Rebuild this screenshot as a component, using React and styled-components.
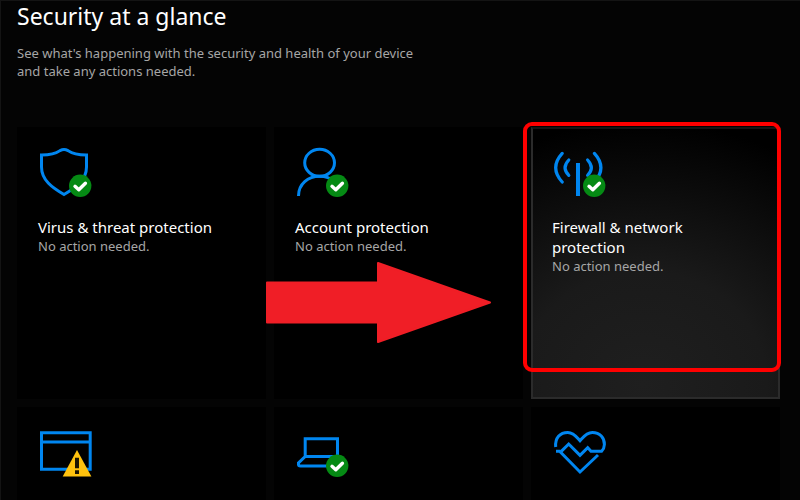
import styled, { createGlobalStyle } from "styled-components";

const GlobalStyle = createGlobalStyle`
  * {
    box-sizing: border-box;
  }
  html {
    scrollbar-width: none;
  }
  body {
    margin: 0;
    background: #040404;
    color: #fff;
    font-family: "Noto Sans", "Open Sans", sans-serif;
  }
`;

const BLUE = "#0086f0";

function OkBadge() {
  return (
    <g stroke="none">
      <circle cx="42.2" cy="38.8" r="11.2" fill="#058a14" />
      <path d="M37 39.3 L40.8 42.8 L47.4 36.2" fill="none" stroke="#fff" strokeWidth="3.4" strokeLinecap="round" strokeLinejoin="round" />
    </g>
  );
}

function ShieldIcon() {
  return (
    <path d="M3.5 8 C12 8 18 6.5 22 3.6 Q26 1.6 30 3.6 C34 6.5 40 8 48.5 8 V20 C48.5 33 38 40.5 26 47.5 C14 40.5 3.5 33 3.5 20 Z" />
  );
}

function AccountIcon() {
  return (
    <>
      <ellipse cx="24.6" cy="15.8" rx="14.9" ry="13.5" />
      <path d="M3.5 49 C3.5 37 13 29.3 24.6 29.3 S45.7 37 45.7 49" />
    </>
  );
}

function FirewallIcon() {
  return (
    <>
      <path strokeWidth="4" d="M26 16 V49" />
      <g strokeLinecap="round" strokeWidth="3.2">
        <path d="M10.2 6.4 Q-2.8 20.7 10.2 35" />
        <path d="M16.8 13 Q9.4 20.7 16.8 28.4" />
        <path d="M35.6 13 Q43 20.7 35.6 28.4" />
        <path d="M42.4 6.4 Q55.4 20.7 42.4 35" />
      </g>
    </>
  );
}

function BrowserIcon() {
  return (
    <>
      <path d="M3.5 5.8 H52.2 V42.3 H3.5 Z M3.5 15 H52.2" />
      <path d="M39 23 L53.4 49.6 H24.7 Z" fill="#ffc20e" stroke="none" />
      <path d="M37 30.7 H41 V41.3 H37 Z M37 43.3 H41 V47 H37 Z" fill="#1c1500" stroke="none" />
    </>
  );
}

function DeviceIcon() {
  return (
    <path d="M10.2 29.5 V11.8 H42.5 V29.5 M42.5 29.5 H10.2 L3.5 36 V37.5 Q3.5 39 5.5 39 H47" />
  );
}

function HealthIcon() {
  return (
    <>
      <path d="M3.7 20 C2.8 11 8 5.4 15.8 5.4 C22 5.4 25 10.5 28 13.8 C31 10.5 34 5.4 40.3 5.4 C48 5.4 52.6 11 52.4 17.5 Q52.3 21.5 49.6 24.3 H39 L35.7 20.6 L28 28.3 L16.7 17 L9 24.6" />
      <path d="M4 24.2 H7.6 L28 45 L46 28" />
    </>
  );
}

const tiles = [
  { id: "virus", title: "Virus & threat protection", status: "No action needed.", Icon: ShieldIcon, ok: true },
  { id: "account", title: "Account protection", status: "No action needed.", Icon: AccountIcon, ok: true, arrow: true },
  { id: "firewall", title: "Firewall & network protection", status: "No action needed.", Icon: FirewallIcon, ok: true, active: true },
  { id: "browser", label: "Browser", Icon: BrowserIcon },
  { id: "device", label: "Device", Icon: DeviceIcon, ok: true },
  { id: "health", label: "Health", Icon: HealthIcon },
];

export default function App() {
  return (
    <Page>
      <GlobalStyle />
      <Header>
        <Heading>Security at a glance</Heading>
        <Intro>
          See what's happening with the security and health of your device and take any actions needed.
        </Intro>
      </Header>
      <Grid>
        {tiles.map(({ id, title, label, status, Icon, ok, arrow, active }) => (
          <Slot key={id}>
            <Tile type="button" aria-label={label} $active={active} $short={!title}>
              <TileIcon viewBox="0 0 56 50" aria-hidden="true">
                <Icon />
                {ok && <OkBadge />}
              </TileIcon>
              {title && <TileTitle>{title}</TileTitle>}
              {status && <TileStatus>{status}</TileStatus>}
            </Tile>
            {arrow && (
              <Arrow viewBox="0 0 225 81" aria-hidden="true">
                <path
                  d="M1 20.5 H112 V1 L224 40.5 L112 80 V60.5 H1 Z"
                  fill="#f01e26"
                  stroke="#f01e26"
                  strokeWidth="2"
                  strokeLinejoin="round"
                />
              </Arrow>
            )}
            {active && <Highlight />}
          </Slot>
        ))}
      </Grid>
    </Page>
  );
}

const Page = styled.main`
  padding: 0 20px 4px 16px;
  border-top: 1px solid #141414;
  border-left: 1px solid #141414;
`;

const Header = styled.header`
  min-height: 126px;
`;

const Heading = styled.h1`
  margin: 0 0 13px;
  font-size: 23px;
  line-height: 30px;
  font-weight: 400;
`;

const Intro = styled.p`
  margin: 0;
  max-width: 420px;
  font-size: 13px;
  line-height: 18px;
  color: #a6a6a6;
`;

const Grid = styled.ul`
  display: grid;
  grid-template-columns: repeat(3, 1fr);
  gap: 8px;
  margin: 0;
  padding: 0;
  list-style: none;
`;

const Slot = styled.li`
  position: relative;
`;

const Tile = styled.button`
  display: flex;
  flex-direction: column;
  align-items: flex-start;
  width: 100%;
  min-height: ${(props) => (props.$short ? "88px" : "272px")};
  padding: 18px 28px 18px 19px;
  border: 2px solid ${(props) => (props.$active ? "#2b2b2b" : "#000")};
  border-top-color: ${(props) => (props.$active ? "#161616" : "#000")};
  background: ${(props) =>
    props.$active
      ? "radial-gradient(ellipse 120% 100% at 45% 95%, #1f1f1f 0%, #1a1a1a 42%, #000 98%)"
      : "#000"};
  color: #fff;
  font-family: inherit;
  text-align: left;
  cursor: pointer;
`;

const TileIcon = styled.svg`
  width: 56px;
  height: 50px;
  margin-bottom: 20px;
  flex-shrink: 0;
  fill: none;
  stroke: ${BLUE};
  stroke-width: 3;
`;

const TileTitle = styled.span`
  font-size: 15px;
  line-height: 20px;
`;

const TileStatus = styled.span`
  font-size: 13px;
  line-height: 18px;
  color: #a6a6a6;
`;

const Arrow = styled.svg`
  position: absolute;
  top: 135px;
  left: -8px;
  width: 225px;
  height: 81px;
  pointer-events: none;
`;

const Highlight = styled.div`
  position: absolute;
  inset: -5px -1px 27px -8px;
  border: 4px solid #ff0000;
  border-radius: 9px;
  pointer-events: none;
`;
